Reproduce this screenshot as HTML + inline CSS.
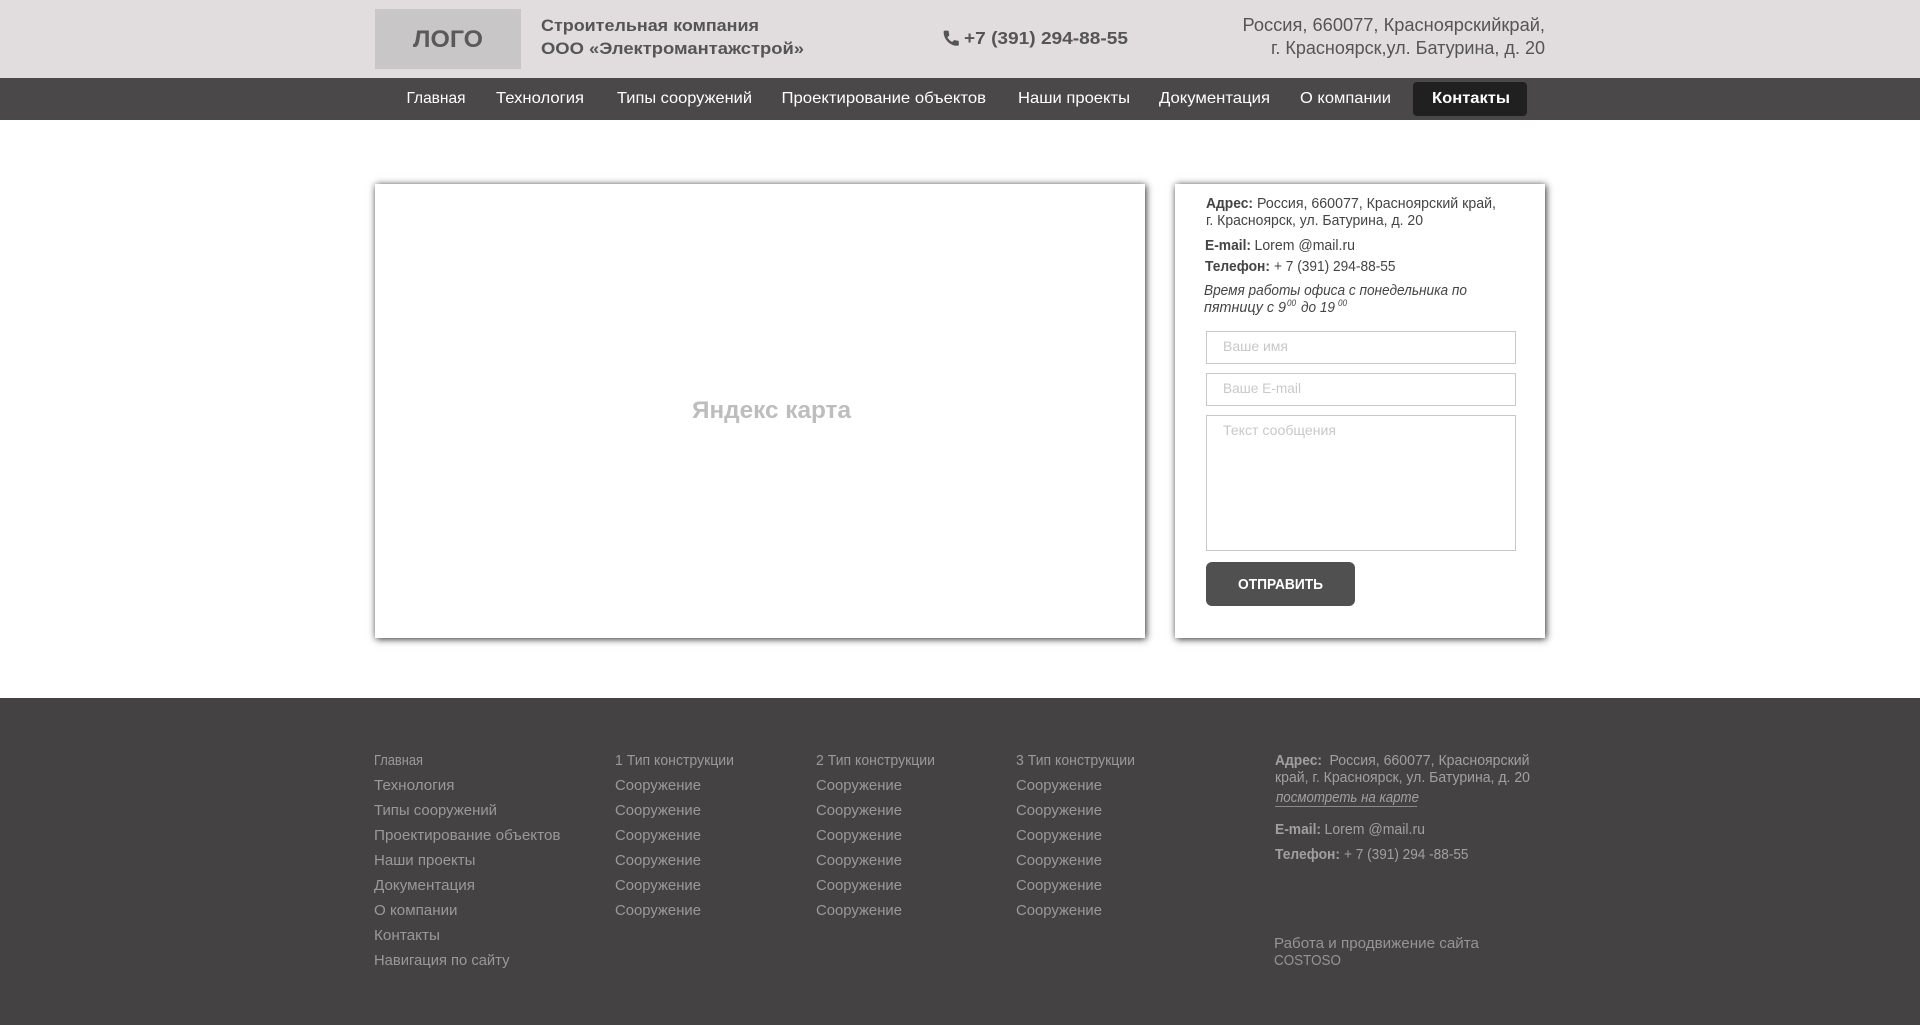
<!DOCTYPE html>
<html lang="ru">
<head>
<meta charset="utf-8">
<title>Контакты</title>
<style>
html,body{margin:0;padding:0;background:#fff;width:1920px;height:1025px;overflow:hidden;font-family:"Liberation Sans",sans-serif}
.b{position:absolute}
#head{left:0;top:0;width:1920px;height:78px;background:#e1dcde}
#logo{left:375px;top:9px;width:146px;height:60px;background:#c8c6c7}
#nav{left:0;top:78px;width:1920px;height:42px;background:#4a4849}
#act{left:1413px;top:82px;width:114px;height:34px;background:#212021;border-radius:4px}
.panel{background:#fff;box-shadow:1px 1px 7px rgba(0,0,0,.85)}
#map{left:375px;top:184px;width:770px;height:454px}
#side{left:1175px;top:184px;width:370px;height:454px}
.field{box-sizing:border-box;left:1206px;width:310px;border:1px solid #c8c8c8;background:#fff}
#btn{left:1206px;top:562px;width:149px;height:44px;background:#505050;border-radius:6px}
#foot{left:0;top:698px;width:1920px;height:327px;background:#454244}
#line{left:1275px;top:806px;width:142px;height:1px;background:#8a8a8a}
svg{position:absolute;left:0;top:0}
text{font-family:"Liberation Sans",sans-serif}
.bd{font-weight:bold}
.it{font-style:italic}
.h{fill:#555}
.n{fill:#fff;font-size:16px}
.s{fill:#444;font-size:14.5px}
.ph{fill:#c8c8c8;font-size:14px}
.f{fill:#999;font-size:14.5px}
.fr{fill:#a0a0a0;font-size:14.5px}
.w{fill:#959595;font-size:14.5px}
</style>
</head>
<body>
<div class="b" id="head"></div>
<div class="b" id="logo"></div>
<div class="b" id="nav"></div>
<div class="b" id="act"></div>
<div class="b panel" id="map"></div>
<div class="b panel" id="side"></div>
<div class="b field" style="top:331px;height:33px"></div>
<div class="b field" style="top:373px;height:33px"></div>
<div class="b field" style="top:415px;height:136px"></div>
<div class="b" id="btn"></div>
<div class="b" id="foot"></div>
<div class="b" id="line"></div>
<svg width="1920" height="1025" viewBox="0 0 1920 1025" xmlns="http://www.w3.org/2000/svg">
<text x="413" y="47" font-size="24" textLength="70" lengthAdjust="spacingAndGlyphs" class="bd" fill="#5a5a5a">ЛОГО</text>
<text x="541" y="31" font-size="17" textLength="218" lengthAdjust="spacingAndGlyphs" class="bd h">Строительная компания</text>
<text x="541" y="54" font-size="17" textLength="263" lengthAdjust="spacingAndGlyphs" class="bd h">ООО «Электромантажстрой»</text>
<g transform="translate(941.6,28.6) scale(.8)"><path fill="#555" stroke="#555" stroke-width="1" stroke-linejoin="round" d="M6.62 10.79c1.44 2.83 3.76 5.14 6.59 6.59l2.2-2.2c.27-.27.67-.36 1.02-.24 1.12.37 2.33.57 3.57.57.55 0 1 .45 1 1V20c0 .55-.45 1-1 1-9.39 0-17-7.61-17-17 0-.55.45-1 1-1h3.5c.55 0 1 .45 1 1 0 1.25.2 2.45.57 3.57.11.35.03.74-.25 1.02l-2.2 2.2z"/></g>
<text x="964" y="44" font-size="17.5" textLength="164" lengthAdjust="spacingAndGlyphs" class="bd h">+7 (391) 294-88-55</text>
<text x="1242.5" y="31" font-size="18" textLength="302.5" lengthAdjust="spacingAndGlyphs" class="h">Россия, 660077, Красноярскийкрай,</text>
<text x="1271" y="54" font-size="18" textLength="274" lengthAdjust="spacingAndGlyphs" class="h">г. Красноярск,ул. Батурина, д. 20</text>

<text x="406.5" y="103" textLength="59" lengthAdjust="spacingAndGlyphs" class="n">Главная</text>
<text x="496" y="103" textLength="88" lengthAdjust="spacingAndGlyphs" class="n">Технология</text>
<text x="617" y="103" textLength="135" lengthAdjust="spacingAndGlyphs" class="n">Типы сооружений</text>
<text x="781.5" y="103" textLength="204.5" lengthAdjust="spacingAndGlyphs" class="n">Проектирование объектов</text>
<text x="1018" y="103" textLength="112" lengthAdjust="spacingAndGlyphs" class="n">Наши проекты</text>
<text x="1159" y="103" textLength="111" lengthAdjust="spacingAndGlyphs" class="n">Документация</text>
<text x="1300" y="103" textLength="91" lengthAdjust="spacingAndGlyphs" class="n">О компании</text>
<text x="1432" y="103" textLength="78" lengthAdjust="spacingAndGlyphs" class="n bd">Контакты</text>

<text x="692" y="418" font-size="24" textLength="159" lengthAdjust="spacingAndGlyphs" class="bd" fill="#bdbdbd">Яндекс карта</text>

<text x="1206" y="208" textLength="47" lengthAdjust="spacingAndGlyphs" class="s bd">Адрес:</text>
<text x="1257" y="208" textLength="239" lengthAdjust="spacingAndGlyphs" class="s">Россия, 660077, Красноярский край,</text>
<text x="1206" y="225" textLength="217" lengthAdjust="spacingAndGlyphs" class="s">г. Красноярск, ул. Батурина, д. 20</text>
<text x="1205" y="250" textLength="46" lengthAdjust="spacingAndGlyphs" class="s bd">E-mail:</text>
<text x="1254.5" y="250" textLength="100.5" lengthAdjust="spacingAndGlyphs" class="s">Lorem @mail.ru</text>
<text x="1205" y="271" textLength="65" lengthAdjust="spacingAndGlyphs" class="s bd">Телефон:</text>
<text x="1274" y="271" textLength="121.5" lengthAdjust="spacingAndGlyphs" class="s">+ 7 (391) 294-88-55</text>
<text x="1204" y="295" textLength="263" lengthAdjust="spacingAndGlyphs" class="s it">Время работы офиса с понедельника по</text>
<text x="1204" y="312" textLength="82" lengthAdjust="spacingAndGlyphs" class="s it">пятницу с 9</text>
<text x="1287" y="306" font-size="9" textLength="9" lengthAdjust="spacingAndGlyphs" class="it" fill="#444">00</text>
<text x="1301" y="312" textLength="34" lengthAdjust="spacingAndGlyphs" class="s it">до 19</text>
<text x="1338" y="306" font-size="9" textLength="9" lengthAdjust="spacingAndGlyphs" class="it" fill="#444">00</text>

<text x="1223" y="351" textLength="65" lengthAdjust="spacingAndGlyphs" class="ph">Ваше имя</text>
<text x="1223" y="393" textLength="78" lengthAdjust="spacingAndGlyphs" class="ph">Ваше E-mail</text>
<text x="1223" y="435" textLength="113" lengthAdjust="spacingAndGlyphs" class="ph">Текст сообщения</text>
<text x="1238" y="589" font-size="14.5" textLength="85" lengthAdjust="spacingAndGlyphs" class="bd" fill="#fff">ОТПРАВИТЬ</text>

<text x="374" y="765" font-size="14" textLength="49" lengthAdjust="spacingAndGlyphs" class="f">Главная</text>
<text x="374" y="790" textLength="80.5" lengthAdjust="spacingAndGlyphs" class="f">Технология</text>
<text x="374" y="815" textLength="123" lengthAdjust="spacingAndGlyphs" class="f">Типы сооружений</text>
<text x="374" y="840" textLength="186.5" lengthAdjust="spacingAndGlyphs" class="f">Проектирование объектов</text>
<text x="374" y="865" textLength="101.5" lengthAdjust="spacingAndGlyphs" class="f">Наши проекты</text>
<text x="374" y="890" textLength="101" lengthAdjust="spacingAndGlyphs" class="f">Документация</text>
<text x="374" y="915" textLength="83.5" lengthAdjust="spacingAndGlyphs" class="f">О компании</text>
<text x="374" y="940" textLength="66" lengthAdjust="spacingAndGlyphs" class="f">Контакты</text>
<text x="374" y="965" textLength="135.5" lengthAdjust="spacingAndGlyphs" class="f">Навигация по сайту</text>

<text x="615" y="765" font-size="14" textLength="119" lengthAdjust="spacingAndGlyphs" class="f">1 Тип конструкции</text>
<text x="615" y="790" textLength="86" lengthAdjust="spacingAndGlyphs" class="f">Сооружение</text>
<text x="615" y="815" textLength="86" lengthAdjust="spacingAndGlyphs" class="f">Сооружение</text>
<text x="615" y="840" textLength="86" lengthAdjust="spacingAndGlyphs" class="f">Сооружение</text>
<text x="615" y="865" textLength="86" lengthAdjust="spacingAndGlyphs" class="f">Сооружение</text>
<text x="615" y="890" textLength="86" lengthAdjust="spacingAndGlyphs" class="f">Сооружение</text>
<text x="615" y="915" textLength="86" lengthAdjust="spacingAndGlyphs" class="f">Сооружение</text>

<text x="816" y="765" font-size="14" textLength="119" lengthAdjust="spacingAndGlyphs" class="f">2 Тип конструкции</text>
<text x="816" y="790" textLength="86" lengthAdjust="spacingAndGlyphs" class="f">Сооружение</text>
<text x="816" y="815" textLength="86" lengthAdjust="spacingAndGlyphs" class="f">Сооружение</text>
<text x="816" y="840" textLength="86" lengthAdjust="spacingAndGlyphs" class="f">Сооружение</text>
<text x="816" y="865" textLength="86" lengthAdjust="spacingAndGlyphs" class="f">Сооружение</text>
<text x="816" y="890" textLength="86" lengthAdjust="spacingAndGlyphs" class="f">Сооружение</text>
<text x="816" y="915" textLength="86" lengthAdjust="spacingAndGlyphs" class="f">Сооружение</text>

<text x="1016" y="765" font-size="14" textLength="119" lengthAdjust="spacingAndGlyphs" class="f">3 Тип конструкции</text>
<text x="1016" y="790" textLength="86" lengthAdjust="spacingAndGlyphs" class="f">Сооружение</text>
<text x="1016" y="815" textLength="86" lengthAdjust="spacingAndGlyphs" class="f">Сооружение</text>
<text x="1016" y="840" textLength="86" lengthAdjust="spacingAndGlyphs" class="f">Сооружение</text>
<text x="1016" y="865" textLength="86" lengthAdjust="spacingAndGlyphs" class="f">Сооружение</text>
<text x="1016" y="890" textLength="86" lengthAdjust="spacingAndGlyphs" class="f">Сооружение</text>
<text x="1016" y="915" textLength="86" lengthAdjust="spacingAndGlyphs" class="f">Сооружение</text>

<text x="1275" y="765" textLength="47" lengthAdjust="spacingAndGlyphs" class="fr bd">Адрес:</text>
<text x="1329.5" y="765" textLength="200" lengthAdjust="spacingAndGlyphs" class="fr">Россия, 660077, Красноярский</text>
<text x="1275" y="782" textLength="255" lengthAdjust="spacingAndGlyphs" class="fr">край, г. Красноярск, ул. Батурина, д. 20</text>
<text x="1276" y="802" font-size="14" textLength="143" lengthAdjust="spacingAndGlyphs" class="fr it">посмотреть на карте</text>
<text x="1275" y="834" textLength="46" lengthAdjust="spacingAndGlyphs" class="fr bd">E-mail:</text>
<text x="1324.5" y="834" textLength="100.5" lengthAdjust="spacingAndGlyphs" class="fr">Lorem @mail.ru</text>
<text x="1275" y="859" textLength="65" lengthAdjust="spacingAndGlyphs" class="fr bd">Телефон:</text>
<text x="1344" y="859" textLength="124.5" lengthAdjust="spacingAndGlyphs" class="fr">+ 7 (391) 294 -88-55</text>
<text x="1274" y="948" textLength="205" lengthAdjust="spacingAndGlyphs" class="w">Работа и продвижение сайта</text>
<text x="1274" y="965" font-size="15" textLength="67" lengthAdjust="spacingAndGlyphs" class="w" style="font-size:15px">COSTOSO</text>
</svg>
</body>
</html>
